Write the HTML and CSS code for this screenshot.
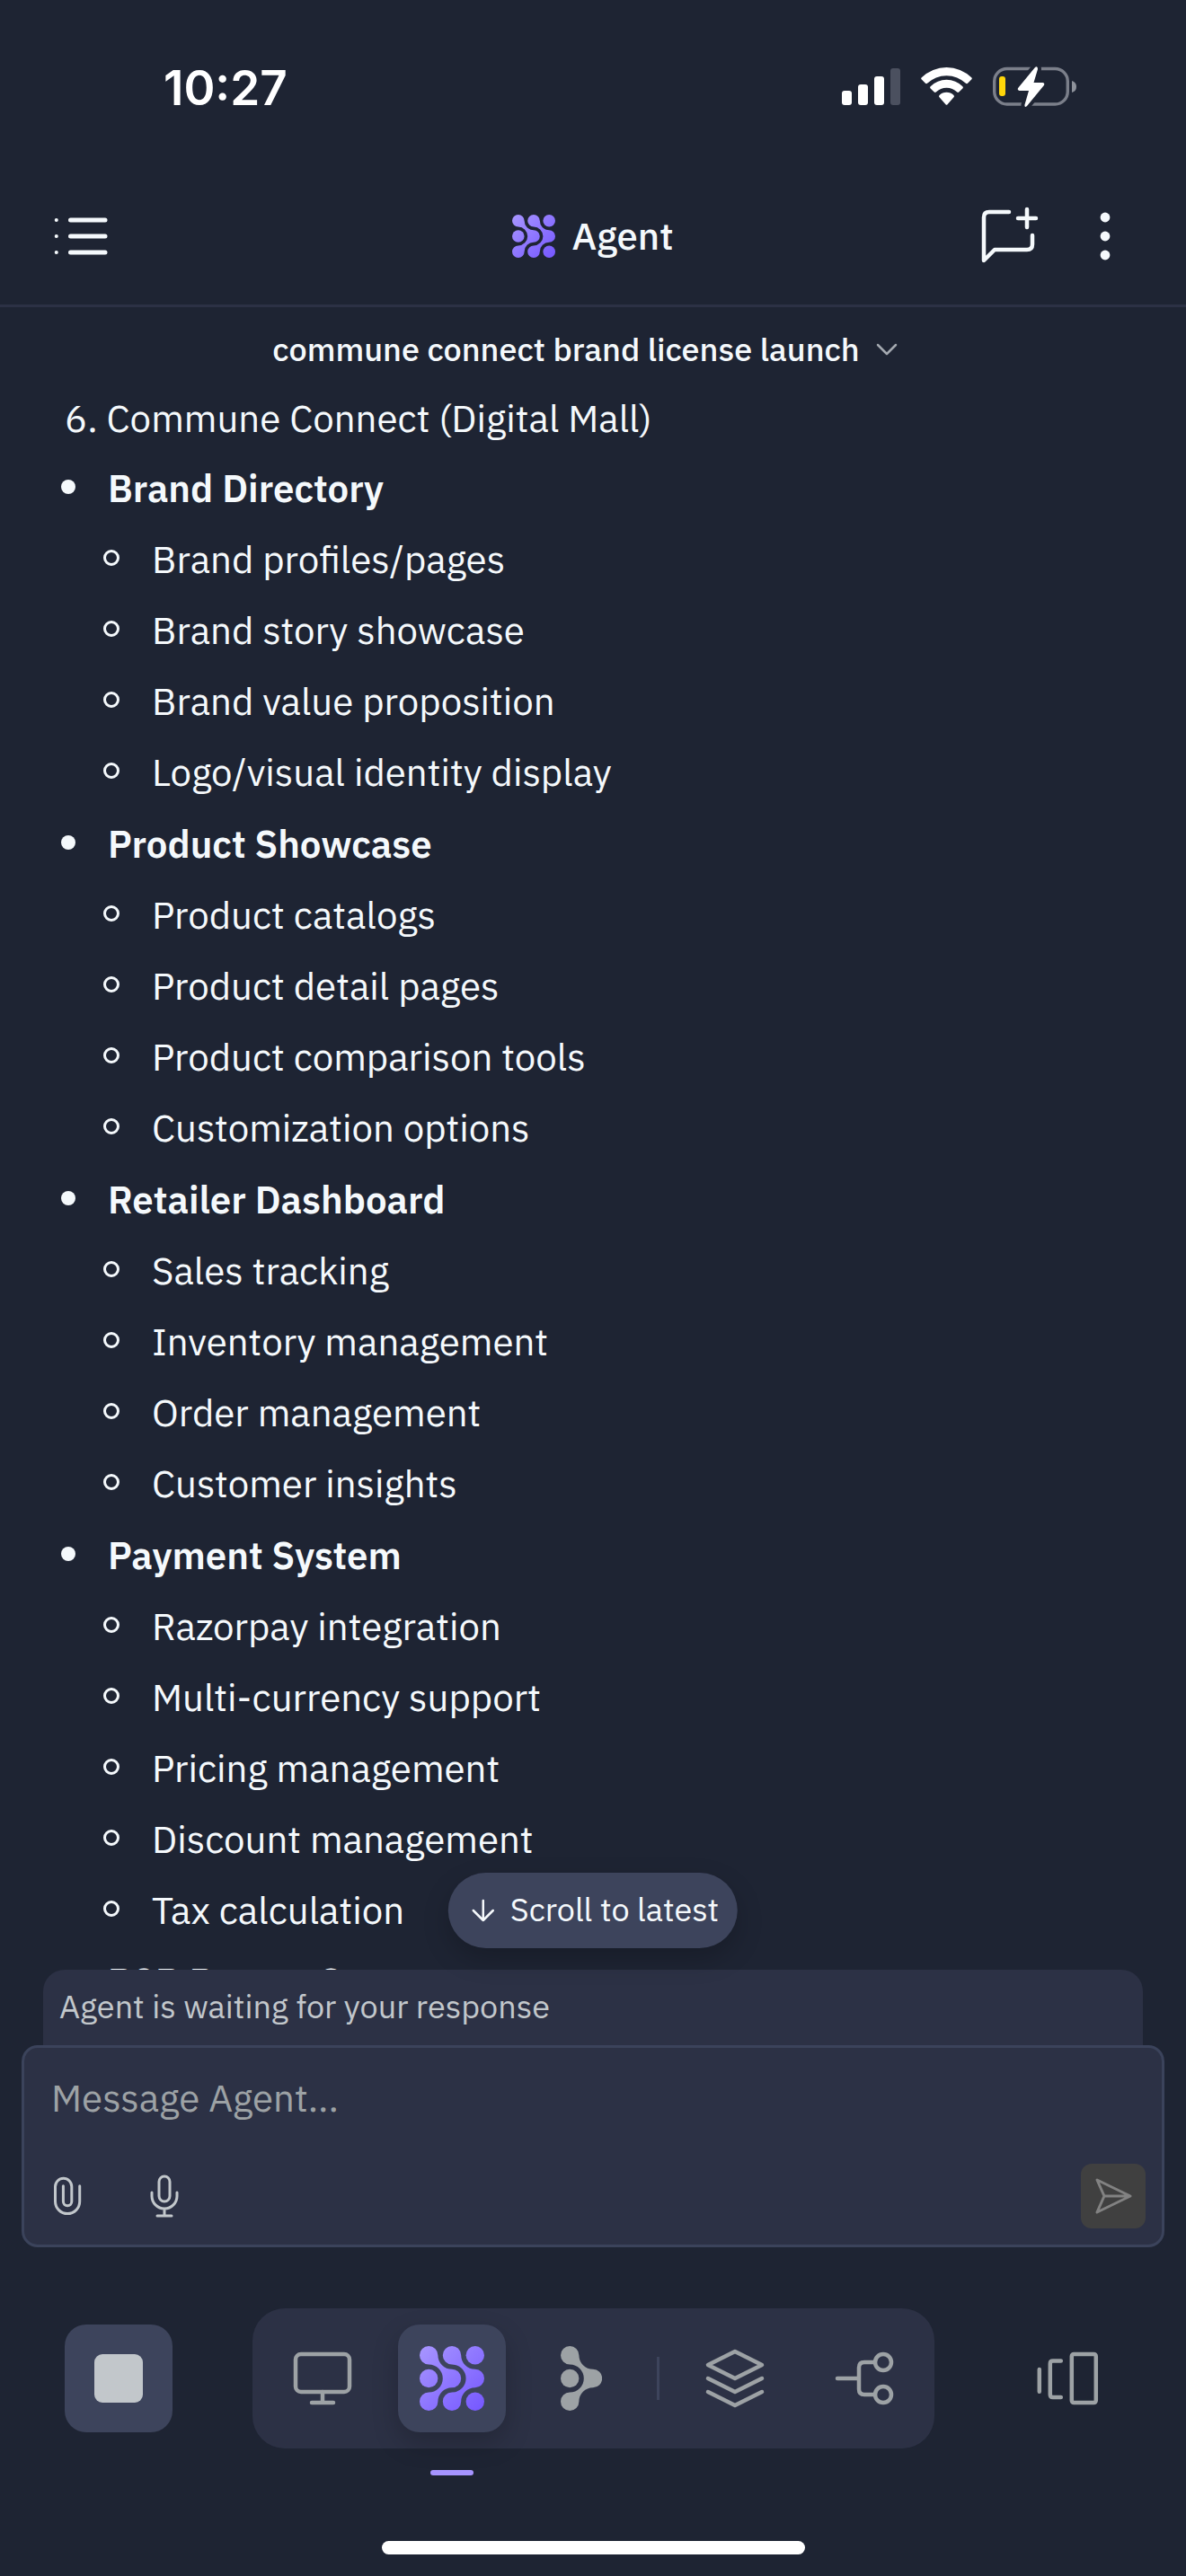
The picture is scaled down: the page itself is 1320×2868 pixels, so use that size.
FILE: index.html
```html
<!DOCTYPE html>
<html lang="en">
<head>
<meta charset="utf-8">
<meta name="viewport" content="width=device-width, initial-scale=1">
<title>Agent</title>
<link rel="stylesheet" href="styles.css">
</head>
<body>
<svg class="defs" width="0" height="0" aria-hidden="true">
  <defs>
    <linearGradient id="violet" gradientUnits="userSpaceOnUse" x1="0" y1="0" x2="72" y2="72">
      <stop offset="0" stop-color="#a896ff"/>
      <stop offset="1" stop-color="#7557ff"/>
    </linearGradient>
    <symbol id="agent-logo" viewBox="0 0 72 72">
      <g fill="url(#violet)">
        <path d="M20.4 10.2A15.6 15.6 0 0 0 36 25.8A10.2 10.2 0 0 1 36 46.2A15.6 15.6 0 0 0 20.4 61.8A10.2 10.2 0 1 1 10.2 51.6A15.6 15.6 0 0 0 10.2 20.4A10.2 10.2 0 1 1 20.4 10.2Z"/>
        <path d="M46.2 10.2A15.6 15.6 0 0 0 61.8 25.8A10.2 10.2 0 0 1 61.8 46.2A15.6 15.6 0 0 0 46.2 61.8A10.2 10.2 0 1 1 36 51.6A15.6 15.6 0 0 0 36 20.4A10.2 10.2 0 1 1 46.2 10.2Z"/>
        <circle cx="61.8" cy="10.2" r="10.2"/>
        <circle cx="10.2" cy="36" r="10.2"/>
        <circle cx="61.8" cy="61.8" r="10.2"/>
      </g>
    </symbol>
  </defs>
</svg>

<div class="app">
  <div class="status-bar">
    <span class="clock">10:27</span>
    <div class="status-icons">
      <svg width="65" height="48" viewBox="0 0 65 48" fill="#fff" role="img" aria-label="Signal">
        <rect x="0" y="27" width="11" height="16" rx="3"/>
        <rect x="18" y="20" width="11" height="23" rx="3"/>
        <rect x="36" y="11" width="11" height="32" rx="3"/>
        <rect x="54" y="2" width="11" height="41" rx="3" fill="#4b505f"/>
      </svg>
      <svg width="57" height="48" viewBox="0 0 57 48" fill="#fff" role="img" aria-label="Wi-Fi">
        <path d="M0.8 12.3A39.5 39.5 0 0 1 56.2 12.3Q57.4 13.5 56.2 14.6L52 18.8Q51 19.6 50 18.8A31 31 0 0 0 7 18.8Q6 19.6 5 18.8L0.8 14.6Q-0.4 13.5 0.8 12.3Z"/>
        <path d="M10.6 22.2A25.5 25.5 0 0 1 46.4 22.2Q47.5 23.3 46.4 24.4L42.2 28.6Q41.2 29.4 40.2 28.6A16.8 16.8 0 0 0 16.8 28.6Q15.8 29.4 14.8 28.6L10.6 24.4Q9.5 23.3 10.6 22.2Z"/>
        <path d="M20.5 32A11.5 11.5 0 0 1 36.5 32Q37.6 33.2 36.5 34.3L29.5 42.3Q28.5 43.4 27.5 42.3L20.5 34.3Q19.4 33.2 20.5 32Z"/>
      </svg>
      <svg width="93" height="48" viewBox="0 0 93 48" role="img" aria-label="Battery charging">
        <rect x="1.7" y="2.5" width="81.6" height="39.5" rx="14" fill="none" stroke="#7b7f8a" stroke-width="3.4"/>
        <path d="M88 16Q93 17.5 93 22.5T88 29Z" fill="#8e929b"/>
        <rect x="7" y="11" width="7" height="22" rx="3" fill="#ffd60a"/>
        <path d="M47 1Q50 -1 50 3L45.5 18H55.5Q58.5 18.5 56.5 21.5L38 44Q35 46.5 35.5 42.5L40 27H29.5Q26.5 26 28.5 23.5Z" fill="#fff" stroke="#1e2433" stroke-width="8" paint-order="stroke"/>
      </svg>
    </div>
  </div>

  <header class="header">
    <div class="header-side">
      <button class="icon-button" aria-label="Open conversations">
        <svg width="60" height="60" viewBox="0 0 60 60" stroke="#f5f9fc" stroke-width="5" stroke-linecap="round">
          <path d="M18.5 12H57M18.5 30H57M18.5 48H57"/>
          <path d="M2.7 12h.1M2.7 30h.1M2.7 48h.1" stroke-width="4"/>
        </svg>
      </button>
    </div>
    <div class="brand">
      <svg width="48" height="48" aria-hidden="true"><use href="#agent-logo"/></svg>
      <h1 class="brand-name">Agent</h1>
    </div>
    <div class="header-side header-side-end">
      <button class="icon-button" aria-label="New chat">
        <svg width="72" height="72" viewBox="0 0 72 72" fill="none" stroke="#f5f9fc" stroke-width="4.5" stroke-linecap="round" stroke-linejoin="round">
          <path d="M37 9H15Q9 9 9 15V63L21 51H57Q63 51 63 45V35"/>
          <path d="M57 6V26M47 16H67"/>
        </svg>
      </button>
      <button class="icon-button" aria-label="More options">
        <svg width="60" height="60" viewBox="0 0 60 60" fill="#f5f9fc">
          <circle cx="30" cy="9" r="5.4"/><circle cx="30" cy="30" r="5.4"/><circle cx="30" cy="51" r="5.4"/>
        </svg>
      </button>
    </div>
  </header>

  <main class="conversation">
    <button class="topic">
      commune connect brand license launch
      <svg width="36" height="36" viewBox="0 0 36 36" fill="none" stroke="#a4a9b0" stroke-width="2.5" stroke-linecap="round" stroke-linejoin="round" aria-hidden="true"><path d="M8 13L18 23L28 13"/></svg>
    </button>
    <div class="messages">
      <p class="lead">6. Commune Connect (Digital Mall)</p>
      <ul class="sections">
        <li><strong class="section-name">Brand Directory</strong>
          <ul class="items"><li>Brand profiles/pages</li><li>Brand story showcase</li><li>Brand value proposition</li><li>Logo/visual identity display</li></ul>
        </li>
        <li><strong class="section-name">Product Showcase</strong>
          <ul class="items"><li>Product catalogs</li><li>Product detail pages</li><li>Product comparison tools</li><li>Customization options</li></ul>
        </li>
        <li><strong class="section-name">Retailer Dashboard</strong>
          <ul class="items"><li>Sales tracking</li><li>Inventory management</li><li>Order management</li><li>Customer insights</li></ul>
        </li>
        <li><strong class="section-name">Payment System</strong>
          <ul class="items"><li>Razorpay integration</li><li>Multi-currency support</li><li>Pricing management</li><li>Discount management</li><li>Tax calculation</li></ul>
        </li>
        <li><strong class="section-name">B2B Rooms Co</strong></li>
      </ul>
    </div>
    <button class="scroll-latest">
      <svg width="36" height="36" viewBox="0 0 36 36" fill="none" stroke="#f5f9fc" stroke-width="2.5" stroke-linecap="round" stroke-linejoin="round" aria-hidden="true"><path d="M18 8V30M7 19L18 30L29 19"/></svg>
      Scroll to latest
    </button>
  </main>

  <p class="waiting">Agent is waiting for your response</p>
  <form class="composer">
    <textarea class="composer-input" rows="1" aria-label="Message Agent" placeholder="Message Agent..."></textarea>
    <div class="composer-tools">
      <button type="button" class="icon-button" aria-label="Attach file">
        <svg width="48" height="48" viewBox="0 0 48 48" fill="none" stroke="#c2c7cb" stroke-width="3" stroke-linecap="round"><path d="M37.7 12.7V30A13.6 13.6 0 0 1 10.5 30V13.5A9.15 9.15 0 0 1 28.8 13.5V30A4.7 4.7 0 0 1 19.4 30V12.7"/></svg>
      </button>
      <button type="button" class="icon-button" aria-label="Voice input">
        <svg width="48" height="48" viewBox="0 0 48 48" fill="none" stroke="#c2c7cb" stroke-width="3" stroke-linecap="round"><rect x="18" y="2" width="12" height="28" rx="6"/><path d="M10 20V24A14 14 0 0 0 38 24V20M24 38V46M16 46H32"/></svg>
      </button>
      <button type="submit" class="send" disabled aria-label="Send">
        <svg width="48" height="48" viewBox="0 0 48 48" fill="none" stroke="#828282" stroke-width="3" stroke-linecap="round" stroke-linejoin="round"><path d="M6 6L43 24L6 42L14 24ZM14 24H43"/></svg>
      </button>
    </div>
  </form>

  <nav class="dock" aria-label="Workspace">
    <button class="dock-button dock-button-filled" aria-label="Stop">
      <svg width="72" height="72" viewBox="0 0 24 24" fill="#c2c7cb"><rect x="3" y="3" width="18" height="18" rx="3"/></svg>
    </button>
    <div class="dock-bar">
      <button class="dock-button" aria-label="Preview">
        <svg class="line-icon" width="72" height="72" viewBox="0 0 24 24"><rect x="2" y="3" width="20" height="14" rx="2"/><path d="M12 17V21M8 21H16"/></svg>
      </button>
      <button class="dock-button dock-button-filled dock-button-active" aria-label="Agent" aria-pressed="true">
        <svg width="72" height="72"><use href="#agent-logo"/></svg>
      </button>
      <button class="dock-button" aria-label="Deploy">
        <svg width="46" height="72" viewBox="0 0 46 72" fill="#9da2a5">
          <path d="M20.4 10.2A15.6 15.6 0 0 0 36 25.8A10.2 10.2 0 0 1 36 46.2A15.6 15.6 0 0 0 20.4 61.8A10.2 10.2 0 1 1 10.2 51.6A15.6 15.6 0 0 0 10.2 20.4A10.2 10.2 0 1 1 20.4 10.2Z"/>
          <circle cx="10.2" cy="36" r="10.2"/>
        </svg>
      </button>
      <span class="dock-divider"></span>
      <button class="dock-button" aria-label="Layers">
        <svg class="line-icon" width="72" height="72" viewBox="0 0 24 24"><path d="M12 2L2 7L12 12L22 7ZM2 12L12 17L22 12M2 17L12 22L22 17"/></svg>
      </button>
      <button class="dock-button" aria-label="Branches">
        <svg class="line-icon" width="72" height="72" viewBox="0 0 24 24"><path d="M2 12H10M16 6H12Q10 6 10 8V16Q10 18 12 18H16"/><circle cx="19" cy="6" r="3"/><circle cx="19" cy="18" r="3"/></svg>
      </button>
    </div>
    <button class="dock-button" aria-label="Switch panel">
      <svg class="line-icon" width="72" height="72" viewBox="0 0 24 24"><path d="M1.6 8.7V16.9M9.6 5.5H6.6Q5.6 5.5 5.6 6.5V18Q5.6 19 6.6 19H9.6"/><rect x="13.6" y="3" width="9" height="18" rx="0.8"/></svg>
    </button>
  </nav>
  <div class="home-indicator"></div>
</div>
</body>
</html>
```
FILE: styles.css
```css
:root {
  --bg: #1e2433;
  --surface: #2c3145;
  --raised: #3d445c;
  --text: #f5f9fc;
  --text-soft: #c2c7cb;
  --text-muted: #9da2a5;
  --accent: #a694ff;
}

*, *::before, *::after { box-sizing: border-box; }

body {
  margin: 0;
  background: var(--bg);
  color: var(--text);
  font-family: "IBM Plex Sans", Roboto, sans-serif;
  font-size: 42px;
}

ul { margin: 0; padding: 0; list-style: none; }
p, h1 { margin: 0; }
svg { display: block; flex: none; }
.defs { position: absolute; }

button {
  padding: 0;
  border: 0;
  background: none;
  color: inherit;
  font: inherit;
}

.app {
  display: flex;
  flex-direction: column;
  height: 100vh;
}

.status-bar {
  display: flex;
  align-items: center;
  justify-content: space-between;
  padding: 67px 122px 57px 182px;
}

.clock {
  font: 600 53px/62px Inter, sans-serif;
  color: #fff;
}

.status-icons { display: flex; gap: 23px; }

.header {
  display: grid;
  grid-template-columns: 1fr auto 1fr;
  align-items: center;
  height: 156px;
  padding: 0 60px;
  border-bottom: 3px solid var(--surface);
}

.header-side { display: flex; align-items: center; gap: 42px; }
.header-side-end { justify-content: flex-end; }
.brand { display: flex; align-items: center; gap: 18px; }
.brand-name { font-size: 42px; font-weight: 500; line-height: 60px; }

.conversation {
  position: relative;
  display: flex;
  flex: 1;
  flex-direction: column;
  min-height: 0;
}

.topic {
  display: flex;
  align-items: center;
  justify-content: center;
  gap: 12px;
  padding: 23px 12px 19px 0;
  font-size: 36px;
  font-weight: 500;
  line-height: 48px;
}

.messages {
  flex: 1;
  min-height: 0;
  overflow: auto;
  scrollbar-width: none;
  padding: 0 68px;
  line-height: 67px;
}

.lead { padding-left: 4px; }

.sections {
  display: flex;
  flex-direction: column;
  gap: 13px;
  margin-top: 11px;
}

.items {
  display: flex;
  flex-direction: column;
  gap: 12px;
  margin-top: 12px;
  padding-left: 47px;
}

.section-name,
.items li {
  display: flex;
  align-items: center;
  gap: 36px;
}

.section-name { font-weight: 600; }

.section-name::before,
.items li::before {
  content: "";
  width: 16px;
  height: 16px;
  margin-bottom: 3px;
  border-radius: 50%;
  background: var(--text);
}

.items li::before {
  width: 18px;
  height: 18px;
  border: 3px solid var(--text);
  background: none;
}

.scroll-latest {
  position: absolute;
  bottom: 24px;
  left: 50%;
  display: flex;
  align-items: center;
  gap: 12px;
  padding: 17px 21px 19px;
  border-radius: 42px;
  background: var(--raised);
  box-shadow: 0 12px 30px rgba(0, 0, 0, 0.2);
  font-size: 36px;
  line-height: 48px;
  white-space: nowrap;
  transform: translateX(-50%);
}

.waiting {
  margin: 0 48px;
  padding: 17px 18px 19px;
  border-radius: 24px 24px 0 0;
  background: var(--surface);
  color: var(--text-soft);
  font-size: 36px;
  line-height: 48px;
}

.composer {
  display: flex;
  flex-direction: column;
  gap: 43px;
  margin: 0 24px;
  padding: 26px 18px 18px;
  border: 3px solid #3b435b;
  border-radius: 18px;
  background: var(--surface);
}

.composer-input {
  height: 60px;
  padding: 0 12px;
  border: 0;
  outline: 0;
  background: none;
  color: var(--text);
  font: inherit;
  line-height: 60px;
  resize: none;
}

.composer-input::placeholder { color: var(--text-muted); opacity: 1; }

.composer-tools {
  display: flex;
  align-items: center;
  gap: 60px;
  padding-left: 6px;
}

.send {
  margin-left: auto;
  padding: 12px;
  border-radius: 12px;
  background: #404040;
}

.dock {
  display: flex;
  align-items: center;
  justify-content: space-between;
  padding: 68px 72px 0;
}

.dock-bar {
  display: flex;
  align-items: center;
  gap: 24px;
  padding: 18px;
  border-radius: 36px;
  background: var(--surface);
}

.dock-button {
  display: flex;
  align-items: center;
  justify-content: center;
  width: 120px;
  height: 120px;
  border-radius: 24px;
}

.dock-button-filled { background: var(--raised); }

.dock-button-active {
  position: relative;
  box-shadow: 0 12px 30px rgba(0, 0, 0, 0.2);
}

.dock-button-active::after {
  content: "";
  position: absolute;
  bottom: -48px;
  width: 48px;
  height: 6px;
  border-radius: 3px;
  background: var(--accent);
}

.dock-divider { width: 3px; height: 48px; background: var(--raised); }

.line-icon {
  fill: none;
  stroke: var(--text-muted);
  stroke-width: 1.5;
  stroke-linecap: round;
  stroke-linejoin: round;
}

.home-indicator {
  align-self: center;
  width: 471px;
  height: 15px;
  margin: 103px 0 24px;
  border-radius: 8px;
  background: #fff;
}
```
